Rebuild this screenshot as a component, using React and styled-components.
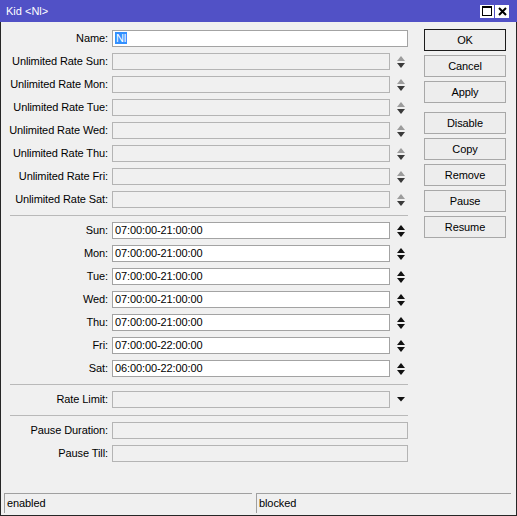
import React from 'react';
import styled, { createGlobalStyle } from 'styled-components';

const GlobalStyle = createGlobalStyle`
  html, body {
    margin: 0;
    background: #ffffff;
  }
  body {
    font-family: 'Liberation Sans', Arial, sans-serif;
    font-size: 11px;
    letter-spacing: -0.1px;
    color: #000;
  }
`;

const Frame = styled.div`
  width: 517px;
  height: 516px;
  display: flex;
  flex-direction: column;
  box-sizing: border-box;
`;

const TitleBar = styled.div`
  height: 22px;
  flex: none;
  display: flex;
  align-items: center;
  padding: 0 8px 0 6px;
  background: #5151c6;
  color: #fff;
  font-size: 11px;
  letter-spacing: 0;
`;

const TitleButtons = styled.div`
  margin-left: auto;
  display: flex;
  gap: 1px;
`;

const TitleButton = styled.div`
  width: 14px;
  height: 13px;
  background: #fff;
  display: flex;
  align-items: center;
  justify-content: center;
`;

const Body = styled.div`
  flex: 1;
  display: flex;
  flex-direction: column;
  background: #f0f0f0;
  border: 1px solid #262626;
  border-top: none;
`;

const Content = styled.div`
  display: flex;
  gap: 16px;
  padding: 8px 0 0 7px;
`;

const Form = styled.div`
  width: 400px;
  display: flex;
  flex-direction: column;
  gap: 6px;
`;

const Row = styled.div`
  display: grid;
  grid-template-columns: 100px 1fr;
  column-gap: 4px;
  height: 17px;
  align-items: center;
`;

const Label = styled.div`
  text-align: right;
  white-space: nowrap;
  line-height: 17px;
`;

const FieldArea = styled.div`
  display: flex;
  align-items: center;
  height: 17px;
`;

const TextBox = styled.div`
  flex: 1;
  height: 17px;
  box-sizing: border-box;
  border: 1px solid ${p => (p.$disabled ? '#b4b4b4' : '#a3a3a3')};
  background: ${p => (p.$disabled ? '#f0f0f0' : '#ffffff')};
  padding: 0 2px;
  line-height: 15px;
  white-space: nowrap;
  overflow: hidden;
`;

const Selected = styled.span`
  background: #3390ff;
  color: #fff;
  padding: 0 1px;
`;

const Trailer = styled.div`
  width: 18px;
  height: 17px;
  box-sizing: border-box;
  padding-left: 7px;
  display: flex;
  align-items: center;
`;

const Separator = styled.div`
  height: 1px;
  margin: 1px 0 0 2px;
  background: #b9b9b9;
`;

const ButtonColumn = styled.div`
  width: 82px;
  margin-top: -1px;
  display: flex;
  flex-direction: column;
  gap: 4px;
`;

const Button = styled.div`
  height: 22px;
  box-sizing: border-box;
  border: 1px solid ${p => (p.$default ? '#1c1c1c' : '#a8a8a8')};
  background: #ededed;
  display: flex;
  align-items: center;
  justify-content: center;
  margin-top: ${p => (p.$spaced ? '5px' : '0')};
`;

const StatusBar = styled.div`
  margin-top: auto;
  display: grid;
  grid-template-columns: 248px 1fr;
  gap: 4px;
  padding: 0 5px 2px 3px;
`;

const StatusCell = styled.div`
  height: 20px;
  box-sizing: border-box;
  border-top: 1px solid #a0a0a0;
  border-left: 1px solid #a0a0a0;
  padding-left: 2px;
  line-height: 19px;
`;

const SpinArrows = ({ disabled }) => (
  <svg width="8" height="12" viewBox="0 0 8 12">
    <polygon points="0,5 4,0 8,5" fill={disabled ? '#9c9c9c' : '#111'} />
    <polygon points="0,7 8,7 4,12" fill={disabled ? '#3a3a3a' : '#111'} />
  </svg>
);

const DropArrow = () => (
  <svg width="8" height="5" viewBox="0 0 8 5">
    <polygon points="0,0 8,0 4,4.5" fill="#111" />
  </svg>
);

const Field = ({ label, value, disabled, trailer, selected }) => (
  <Row>
    <Label>{label}:</Label>
    <FieldArea>
      <TextBox $disabled={disabled}>
        {selected ? <Selected>{value}</Selected> : value}
      </TextBox>
      {trailer === 'spin' && (
        <Trailer>
          <SpinArrows disabled={disabled} />
        </Trailer>
      )}
      {trailer === 'drop' && (
        <Trailer>
          <DropArrow />
        </Trailer>
      )}
    </FieldArea>
  </Row>
);

const days = ['Sun', 'Mon', 'Tue', 'Wed', 'Thu', 'Fri', 'Sat'];

const schedule = {
  Sun: '07:00:00-21:00:00',
  Mon: '07:00:00-21:00:00',
  Tue: '07:00:00-21:00:00',
  Wed: '07:00:00-21:00:00',
  Thu: '07:00:00-21:00:00',
  Fri: '07:00:00-22:00:00',
  Sat: '06:00:00-22:00:00',
};

const buttons = [
  { text: 'OK', isDefault: true },
  { text: 'Cancel' },
  { text: 'Apply' },
  { text: 'Disable', spaced: true },
  { text: 'Copy' },
  { text: 'Remove' },
  { text: 'Pause' },
  { text: 'Resume' },
];

export default function App() {
  return (
    <>
      <GlobalStyle />
      <Frame>
        <TitleBar>
          <span>Kid &lt;Nl&gt;</span>
          <TitleButtons>
            <TitleButton>
              <svg width="10" height="10" viewBox="0 0 10 10">
                <rect x="0.5" y="0.5" width="9" height="9" fill="none" stroke="#000" />
                <rect x="0" y="0" width="10" height="2" fill="#000" />
              </svg>
            </TitleButton>
            <TitleButton>
              <svg width="9" height="9" viewBox="0 0 9 9">
                <path d="M1 1 L8 8 M8 1 L1 8" stroke="#000" strokeWidth="2" />
              </svg>
            </TitleButton>
          </TitleButtons>
        </TitleBar>

        <Body>
          <Content>
            <Form>
              <Field label="Name" value="Nl" selected />
              {days.map(d => (
                <Field key={`u-${d}`} label={`Unlimited Rate ${d}`} disabled trailer="spin" />
              ))}
              <Separator />
              {days.map(d => (
                <Field key={`t-${d}`} label={d} value={schedule[d]} trailer="spin" />
              ))}
              <Separator />
              <Field label="Rate Limit" disabled trailer="drop" />
              <Separator />
              <Field label="Pause Duration" disabled />
              <Field label="Pause Till" disabled />
            </Form>

            <ButtonColumn>
              {buttons.map(b => (
                <Button key={b.text} $default={b.isDefault} $spaced={b.spaced}>
                  {b.text}
                </Button>
              ))}
            </ButtonColumn>
          </Content>

          <StatusBar>
            <StatusCell>enabled</StatusCell>
            <StatusCell>blocked</StatusCell>
          </StatusBar>
        </Body>
      </Frame>
    </>
  );
}
